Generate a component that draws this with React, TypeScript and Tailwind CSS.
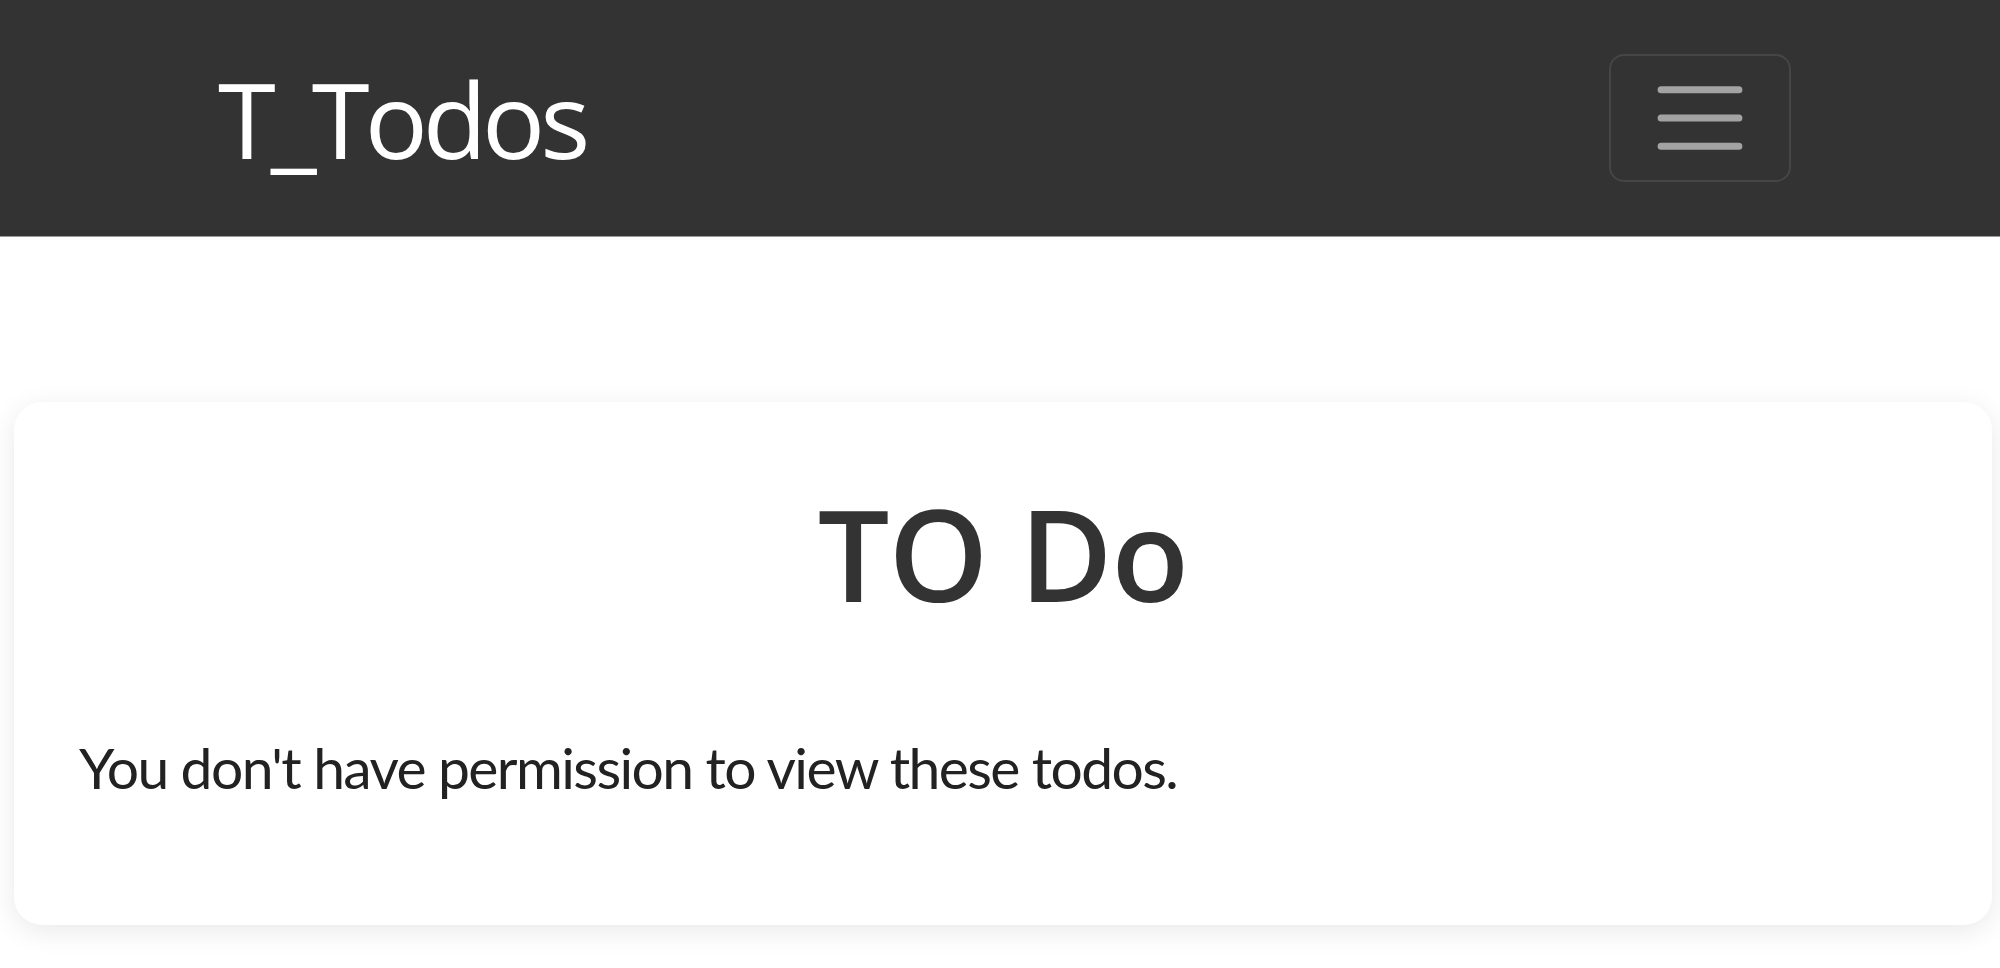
import React from "react";

const Toggler = () => {
    return (
        <button className="flex h-[128px] w-[182px] items-center justify-center rounded-[15px] border-2 border-[#464646]">
            <svg width="106" height="106" viewBox="0 0 30 30">
                <path
                    stroke="rgba(255,255,255,0.55)"
                    strokeLinecap="round"
                    strokeMiterlimit="10"
                    strokeWidth="2"
                    d="M4 7h22M4 15h22M4 23h22"
                />
            </svg>
        </button>
    );
};

const App = () => {
    return (
        <div className="min-h-screen bg-white font-['Open_Sans',sans-serif]">
            {/* navbar */}
            <nav className="flex h-[237px] items-center justify-between border-b border-[#9a9a9a] bg-[#333333] pl-[218px] pr-[209px]">
                <a className="text-[105px] leading-none tracking-[-5px] text-white">T_Todos</a>
                <Toggler />
            </nav>

            {/* todo card */}
            <div className="pt-[165px] pl-[14px] pr-[8px]">
                <div className="rounded-[28px] bg-white pt-[87px] pb-[129px] pl-[65px] pr-[65px] shadow-[0_6px_28px_rgba(0,0,0,0.09)]">
                    <h1 className="text-center text-[127px] font-semibold leading-none tracking-[-1px] text-[#333333]">
                        TO Do
                    </h1>
                    <p className="mt-[123px] font-['Lato',sans-serif] text-[57px] leading-none tracking-[-1.6px] text-[#222222]">
                        You don't have permission to view these todos.
                    </p>
                </div>
            </div>
        </div>
    );
};

export default App;
